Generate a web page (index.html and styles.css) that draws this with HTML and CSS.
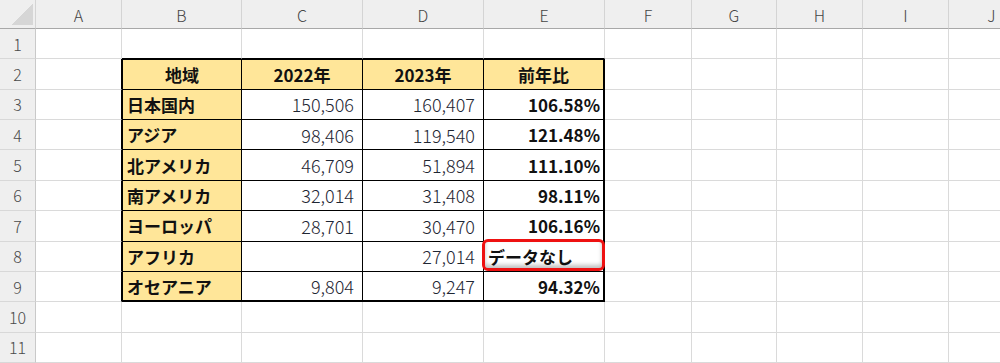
FILE: index.html
```html
<!DOCTYPE html>
<html>
<head>
  <meta charset="UTF-8">
  <title>地域別 前年比</title>
  <link rel="stylesheet" href="styles.css">
</head>
<body>

<div class="sheet">
  <!-- column headers -->
  <div class="corner"></div><div class="ch">A</div><div class="ch">B</div><div class="ch">C</div><div class="ch">D</div><div class="ch">E</div><div class="ch">F</div><div class="ch">G</div><div class="ch">H</div><div class="ch">I</div><div class="ch">J</div>

  <!-- row 1 -->
  <div class="rh">1</div><div class="c"></div><div class="c above"></div><div class="c above"></div><div class="c above"></div><div class="c above"></div><div class="c"></div><div class="c"></div><div class="c"></div><div class="c"></div><div class="c"></div>

  <!-- row 2 : table head -->
  <div class="rh">2</div><div class="c before"></div>
  <div class="c t top first head">地域</div>
  <div class="c t top head">2022年</div>
  <div class="c t top head">2023年</div>
  <div class="c t top last head">前年比</div>
  <div class="c"></div><div class="c"></div><div class="c"></div><div class="c"></div><div class="c"></div>

  <!-- row 3 -->
  <div class="rh">3</div><div class="c before"></div>
  <div class="c t first lbl">日本国内</div>
  <div class="c t num">150,506</div>
  <div class="c t num">160,407</div>
  <div class="c t last pct">106.58%</div>
  <div class="c"></div><div class="c"></div><div class="c"></div><div class="c"></div><div class="c"></div>

  <!-- row 4 -->
  <div class="rh">4</div><div class="c before"></div>
  <div class="c t first lbl">アジア</div>
  <div class="c t num">98,406</div>
  <div class="c t num">119,540</div>
  <div class="c t last pct">121.48%</div>
  <div class="c"></div><div class="c"></div><div class="c"></div><div class="c"></div><div class="c"></div>

  <!-- row 5 -->
  <div class="rh">5</div><div class="c before"></div>
  <div class="c t first lbl">北アメリカ</div>
  <div class="c t num">46,709</div>
  <div class="c t num">51,894</div>
  <div class="c t last pct">111.10%</div>
  <div class="c"></div><div class="c"></div><div class="c"></div><div class="c"></div><div class="c"></div>

  <!-- row 6 -->
  <div class="rh">6</div><div class="c before"></div>
  <div class="c t first lbl">南アメリカ</div>
  <div class="c t num">32,014</div>
  <div class="c t num">31,408</div>
  <div class="c t last pct">98.11%</div>
  <div class="c"></div><div class="c"></div><div class="c"></div><div class="c"></div><div class="c"></div>

  <!-- row 7 -->
  <div class="rh">7</div><div class="c before"></div>
  <div class="c t first lbl">ヨーロッパ</div>
  <div class="c t num">28,701</div>
  <div class="c t num">30,470</div>
  <div class="c t last pct">106.16%</div>
  <div class="c"></div><div class="c"></div><div class="c"></div><div class="c"></div><div class="c"></div>

  <!-- row 8 -->
  <div class="rh">8</div><div class="c before"></div>
  <div class="c t first lbl">アフリカ</div>
  <div class="c t num"></div>
  <div class="c t num">27,014</div>
  <div class="c t last note">データなし</div>
  <div class="c"></div><div class="c"></div><div class="c"></div><div class="c"></div><div class="c"></div>

  <!-- row 9 -->
  <div class="rh">9</div><div class="c before"></div>
  <div class="c t first bottom lbl">オセアニア</div>
  <div class="c t bottom num">9,804</div>
  <div class="c t bottom num">9,247</div>
  <div class="c t last bottom pct">94.32%</div>
  <div class="c"></div><div class="c"></div><div class="c"></div><div class="c"></div><div class="c"></div>

  <!-- row 10 -->
  <div class="rh">10</div><div class="c"></div><div class="c"></div><div class="c"></div><div class="c"></div><div class="c"></div><div class="c"></div><div class="c"></div><div class="c"></div><div class="c"></div><div class="c"></div>

  <!-- row 11 -->
  <div class="rh">11</div><div class="c"></div><div class="c"></div><div class="c"></div><div class="c"></div><div class="c"></div><div class="c"></div><div class="c"></div><div class="c"></div><div class="c"></div><div class="c"></div>
</div>

</body>
</html>
```

FILE: styles.css
```css
/* page */
body {
  margin: 0;
  background: #ffffff;
  overflow: hidden;
}

/* the sheet grid: row heading + columns A..J (J runs past the window edge) */
.sheet {
  display: grid;
  grid-template-columns: 36px 86px 120px 121px 121px 121px 87px 85px 86px 86px 86px;
  grid-template-rows: 29px repeat(11, 1fr);
  width: 1035px;
  height: 363px;
  font-family: "Noto Sans CJK JP", "Noto Sans", sans-serif;
  color: #222222;
}

.sheet > div {
  box-sizing: border-box;
  display: flex;
  align-items: center;
  min-width: 0;
  white-space: nowrap;
}

/* headers */
.corner {
  background-color: #efefef;
  background-image: linear-gradient(to bottom right, transparent 50%, #d6d6d6 50%);
  background-size: 21px 21px;
  background-position: 12px 4px;
  background-repeat: no-repeat;
  border-right: 1px solid #d4d4d4;
  border-bottom: 1px solid #a8a8a8;
}

.ch {
  justify-content: center;
  background: #efefef;
  border-right: 1px solid #d4d4d4;
  border-bottom: 1px solid #a8a8a8;
  font-size: 16px;
  font-weight: 300;
  color: #444444;
  padding-top: 1px;
}

.rh {
  justify-content: center;
  background: #efefef;
  border-right: 1px solid #c9c9c9;
  border-bottom: 1px solid #d8d8d8;
  font-size: 16px;
  font-weight: 300;
  color: #4a4a4a;
}

/* ordinary cells */
.c {
  border-right: 1px solid #dadada;
  border-bottom: 1px solid #dadada;
}

.above {
  border-bottom-color: #000000;
}

.before {
  border-right-color: #000000;
}

/* table cells */
.t {
  border-right-color: #000000;
  border-bottom-color: #000000;
  font-size: 17px;
}

.top {
  border-top: 1px solid #000000;
}

.first {
  border-left: 1px solid #000000;
}

.last {
  border-right-width: 2px;
}

.bottom {
  border-bottom-width: 2px;
}

.head {
  justify-content: center;
  background: #ffe699;
  font-weight: 700;
  color: #111111;
}

.lbl {
  background: #ffe699;
  font-weight: 700;
  color: #111111;
  padding-left: 4px;
}

.num {
  justify-content: flex-end;
  padding-right: 8px;
  font-weight: 300;
  font-size: 18px;
  color: #1e2633;
}

.pct {
  justify-content: flex-end;
  padding-right: 3px;
  font-weight: 700;
  font-size: 17px;
  color: #111111;
}

/* highlighted note cell */
.note {
  position: relative;
  font-weight: 700;
  color: #111111;
  padding-left: 4px;
}

.note::after {
  content: "";
  position: absolute;
  top: -3px;
  left: -2px;
  right: -2px;
  bottom: 0;
  border: 3px solid #ee1111;
  border-radius: 6px;
  box-shadow: inset 0 -3px 4px rgba(0, 0, 0, 0.25);
}
```
